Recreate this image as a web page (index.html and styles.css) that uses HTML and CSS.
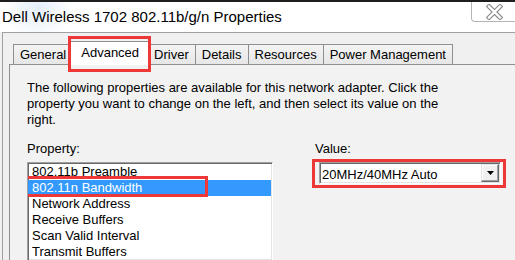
FILE: index.html
```html
<!DOCTYPE html>
<html lang="en">
<head>
    <meta charset="UTF-8" />
    <meta name="viewport" content="width=device-width, initial-scale=1.0" />
    <title>Dell Wireless 1702 802.11b/g/n Properties</title>
    <link rel="stylesheet" href="styles.css">
</head>
<body>
    <div class="titlebar">
        <span class="title">Dell Wireless 1702 802.11b/g/n Properties</span>
        <div class="close">
            <svg width="17" height="16" viewBox="0 0 17 16">
                <path d="M3 2.5 L14 13.5 M14 2.5 L3 13.5" stroke="#8c8c8c" stroke-width="4.6" stroke-linecap="square" fill="none" />
                <path d="M3 2.5 L14 13.5 M14 2.5 L3 13.5" stroke="#fff" stroke-width="2.4" stroke-linecap="square" fill="none" />
            </svg>
        </div>
    </div>

    <div class="frame">
        <div class="tabs">
            <div class="tab">General</div>
            <div class="tab active">Advanced</div>
            <div class="tab">Driver</div>
            <div class="tab">Details</div>
            <div class="tab">Resources</div>
            <div class="tab">Power Management</div>
        </div>

        <div class="panel">
            <p class="intro">The following properties are available for this network adapter. Click the property you want to change on the left, and then select its value on the right.</p>

            <div class="fields">
                <div class="field-property">
                    <div class="label">Property:</div>
                    <div class="listbox">
                        <div class="item">802.11b Preamble</div>
                        <div class="item selected">802.11n Bandwidth</div>
                        <div class="item">Network Address</div>
                        <div class="item">Receive Buffers</div>
                        <div class="item">Scan Valid Interval</div>
                        <div class="item">Transmit Buffers</div>
                    </div>
                </div>
                <div class="field-value">
                    <div class="label">Value:</div>
                    <div class="marked">
                        <div class="combo">
                            <span class="combo-text">20MHz/40MHz Auto</span>
                            <span class="combo-btn">
                                <svg width="7" height="4" viewBox="0 0 7 4"><polygon points="0,0 7,0 3.5,4" fill="#000" /></svg>
                            </span>
                        </div>
                    </div>
                </div>
            </div>
        </div>
    </div>
</body>
</html>
```

FILE: styles.css
```css
body { margin: 0; width: 515px; height: 260px; overflow: hidden; font-family: "Liberation Sans", Arial, sans-serif; font-size: 13px; color: #000; background: #f0f0f0; }

/* title bar */
.titlebar { display: flex; justify-content: space-between; align-items: flex-start; height: 30px; border-top: 2px solid #1e1e1e; background: radial-gradient(circle at 38px 6px, #e4eef8 0, #ffffff 34px); }
.title { font-size: 15px; line-height: 30px; padding-left: 2px; white-space: nowrap; }
.close { width: 42px; height: 19px; border: 1px solid #b4b4b4; border-top: none; border-right: none; border-radius: 0 0 0 4px; background: #fff; display: flex; align-items: center; justify-content: center; padding-left: 1px; }

/* dialog body */
.frame { margin-left: 2px; border-left: 1px solid #a0a0a0; border-top: 1px solid #a0a0a0; }

.tabs { display: flex; align-items: flex-end; padding: 8px 0 0 10px; }
.tab { box-sizing: border-box; height: 20px; padding: 0 6px; line-height: 19px; border: 1px solid #8e8f8f; border-bottom: none; background: linear-gradient(#f4f4f4, #e6e6e6); white-space: nowrap; }
.tab + .tab { margin-left: -1px; }
.tab.active { position: relative; z-index: 1; height: 24px; line-height: 21px; padding: 0 10px; margin: 0 -2px -1px -3px; background: #fff; }
.tab.active::after { content: ""; position: absolute; left: -3px; top: -6px; right: -2px; bottom: -7px; border: 3px solid #ee3838; }

.panel { margin-left: 6px; height: 180px; padding: 15px 0 0 17px; border: 1px solid #8e8f8f; border-right: none; border-bottom: none; background: #f2f2f2; }
.intro { margin: 0; width: 440px; line-height: 16px; }

.fields { display: flex; gap: 42px; margin-top: 13px; }
.label { line-height: 16px; }

.field-property { width: 246px; }
.listbox { margin-top: 5px; height: 96px; overflow: hidden; background: #fff; border: 1px solid; border-color: #a0a0a0 #fff #fff #a0a0a0; box-shadow: inset 1px 1px 0 #696969, inset -1px -1px 0 #e3e3e3; padding: 1px 1px 0 1px; }
.item { position: relative; height: 16px; line-height: 16px; padding-left: 3px; white-space: nowrap; }
.item.selected { background: #3399ff; color: #fff; }
.item.selected::before { content: ""; position: absolute; left: -9px; top: 0; bottom: 0; width: 9px; background: #3399ff; }
.item.selected::after { content: ""; position: absolute; left: -12px; top: -4px; bottom: -1px; width: 191px; box-sizing: border-box; border: 3px solid #ee3838; }

.marked { margin: 2px 0 0 -3px; width: 183px; padding: 0 1px 1px 4px; border: 3px solid #ee3838; }
.combo { box-sizing: border-box; width: 182px; height: 22px; display: flex; align-items: center; justify-content: space-between; background: #fff; border: 1px solid; border-color: #a0a0a0 #fff #fff #a0a0a0; box-shadow: inset 1px 1px 0 #696969, inset -1px -1px 0 #e3e3e3; padding: 0 1px 0 2px; }
.combo-text { padding-top: 2px; white-space: nowrap; }
.combo-btn { box-sizing: border-box; width: 18px; height: 18px; display: flex; align-items: center; justify-content: center; background: #f0f0f0; border: 1px solid; border-color: #e3e3e3 #696969 #696969 #e3e3e3; box-shadow: inset -1px -1px 0 #a0a0a0, inset 1px 1px 0 #fff; }
```
